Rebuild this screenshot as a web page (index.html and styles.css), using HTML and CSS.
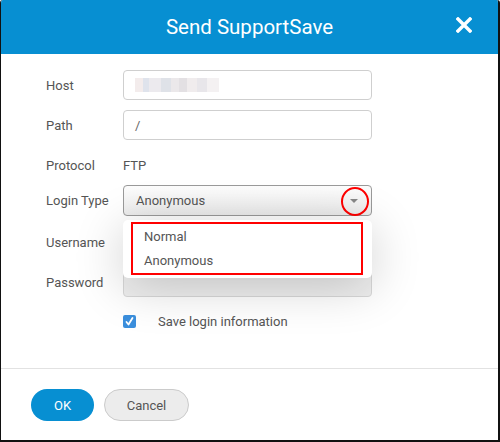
FILE: index.html
```html
<!DOCTYPE html>
<html lang="en">
<head>
<meta charset="UTF-8">
<title>Send SupportSave</title>
<link rel="stylesheet" href="styles.css">
</head>
<body>
<div class="dialog">
    <div class="dialog-header">
        <span class="dialog-title">Send SupportSave</span>
        <span class="close-btn">
            <svg width="16" height="16" viewBox="0 0 16 16">
                <path d="M2 2 L14 14 M14 2 L2 14" stroke="#fff" stroke-width="3.4" stroke-linecap="square"/>
            </svg>
        </span>
    </div>

    <div class="dialog-body">
        <div class="row">
            <label>Host</label>
            <div class="input"><span class="blurred"></span></div>
        </div>
        <div class="row">
            <label>Path</label>
            <div class="input">/</div>
        </div>
        <div class="row row-protocol">
            <label>Protocol</label>
            <div class="value">FTP</div>
        </div>
        <div class="row row-login">
            <label>Login Type</label>
            <div class="select-wrap">
                <div class="select">
                    Anonymous
                    <span class="arrow"></span>
                    <span class="mark-circle"></span>
                </div>
                <!-- open dropdown list -->
                <div class="dropdown">
                    <div class="mark-box">
                        <div class="option">Normal</div>
                        <div class="option">Anonymous</div>
                    </div>
                </div>
            </div>
        </div>
        <div class="row">
            <label>Username</label>
            <div class="input"></div>
        </div>
        <div class="row">
            <label>Password</label>
            <div class="input disabled"></div>
        </div>
        <div class="row row-check">
            <label></label>
            <div class="check-line">
                <span class="checkbox">
                    <svg width="13" height="13" viewBox="0 0 13 13">
                        <path d="M3.5 7 L5.5 9.5 L9.5 3" stroke="#fff" stroke-width="1.8" fill="none" stroke-linecap="round" stroke-linejoin="round"/>
                    </svg>
                </span>
                <span class="check-label">Save login information</span>
            </div>
        </div>
    </div>

    <div class="dialog-footer">
        <button class="btn btn-primary">OK</button>
        <button class="btn btn-default">Cancel</button>
    </div>
</div>
</body>
</html>
```

FILE: styles.css
```css
body {
    margin: 0;
    font-family: Roboto, "Liberation Sans", sans-serif;
    background: #fff;
}

.dialog {
    width: 500px;
    height: 442px;
    box-sizing: border-box;
    border-left: 1px solid #111;
    border-right: 2px solid #111;
    border-bottom: 2px solid #111;
    border-radius: 3px 3px 0 0;
    display: flex;
    flex-direction: column;
    overflow: hidden;
}

.dialog-header {
    height: 54px;
    background-color: #078fd2;
    display: flex;
    align-items: center;
    justify-content: center;
    position: relative;
    flex-shrink: 0;
}
.dialog-title {
    color: #fff;
    font-size: 20.5px;
}
.close-btn {
    position: absolute;
    right: 26px;
    top: 17px;
    width: 16px;
    height: 16px;
}

.dialog-body {
    flex: 1;
    padding: 16px 0 0 45px;
}

.row {
    display: flex;
    align-items: center;
    height: 30px;
    margin-bottom: 10px;
}
.row-protocol {
    margin-bottom: 5px;
}
.row-login {
    margin-bottom: 12px;
}
.row-check {
    margin-top: -1px;
}
.row label {
    width: 77px;
    flex-shrink: 0;
    font-size: 13px;
    color: #555;
}

.input {
    width: 249px;
    height: 30px;
    box-sizing: border-box;
    border: 1px solid #cfcfcf;
    border-radius: 4px;
    padding: 0 11px;
    display: flex;
    align-items: center;
    font-size: 13px;
    color: #666;
    background: #fff;
}
.input.disabled {
    background: #efefef;
    border-color: #d8d8d8;
}
.blurred {
    width: 84px;
    height: 14px;
    background: linear-gradient(90deg,
        #f3ecec 0 8px, #dfe3ec 8px 14px, #eceaee 14px 26px, #dfe2e8 26px 36px,
        #ebe8ea 36px 44px, #e3e0e3 44px 52px, #f0eced 52px 62px, #e8e6ea 62px 72px, #f4f1f2 72px 84px);
}

.value {
    font-size: 13px;
    color: #555;
}

.select-wrap {
    position: relative;
}
.select {
    width: 249px;
    height: 31px;
    box-sizing: border-box;
    border: 1px solid #9a9a9a;
    border-radius: 4px;
    padding: 0 12px;
    display: flex;
    align-items: center;
    font-size: 13px;
    color: #555;
    background: linear-gradient(#fdfdfd, #ececec);
    position: relative;
}
.arrow {
    position: absolute;
    right: 13px;
    top: 13px;
    width: 0;
    height: 0;
    border-left: 4px solid transparent;
    border-right: 4px solid transparent;
    border-top: 4px solid #888;
}
.mark-circle {
    position: absolute;
    right: 2px;
    top: 1px;
    width: 24px;
    height: 25px;
    border: 2px solid #f00;
    border-radius: 50%;
}

.dropdown {
    position: absolute;
    left: 0;
    top: 35px;
    width: 249px;
    height: 58px;
    box-sizing: border-box;
    background: #fff;
    border-radius: 5px;
    box-shadow: 0 8px 50px rgba(0, 0, 0, 0.2);
    padding: 2px 9px 3px 8px;
    z-index: 2;
}
.mark-box {
    height: 100%;
    box-sizing: border-box;
    border: 2px solid #f00;
    padding: 1px 0 0 11px;
}
.option {
    font-size: 13px;
    color: #555;
    height: 24px;
    line-height: 24px;
}

.check-line {
    display: flex;
    align-items: center;
}
.checkbox {
    width: 13px;
    height: 13px;
    background: #3b8fdd;
    border-radius: 2px;
    display: inline-flex;
}
.check-label {
    margin-left: 22px;
    font-size: 13px;
    color: #555;
}

.dialog-footer {
    height: 72px;
    box-sizing: border-box;
    border-top: 1px solid #e2e2e2;
    padding: 20px 0 0 30px;
    display: flex;
    align-items: flex-start;
    gap: 10px;
    flex-shrink: 0;
}
.btn {
    height: 32px;
    border-radius: 16px;
    font-family: Roboto, "Liberation Sans", sans-serif;
    font-size: 13px;
    cursor: pointer;
}
.btn-primary {
    width: 63px;
    background: #078fd2;
    border: none;
    color: #fff;
}
.btn-default {
    width: 85px;
    background: #ececec;
    border: 1px solid #cbcbcb;
    color: #555;
}
```
